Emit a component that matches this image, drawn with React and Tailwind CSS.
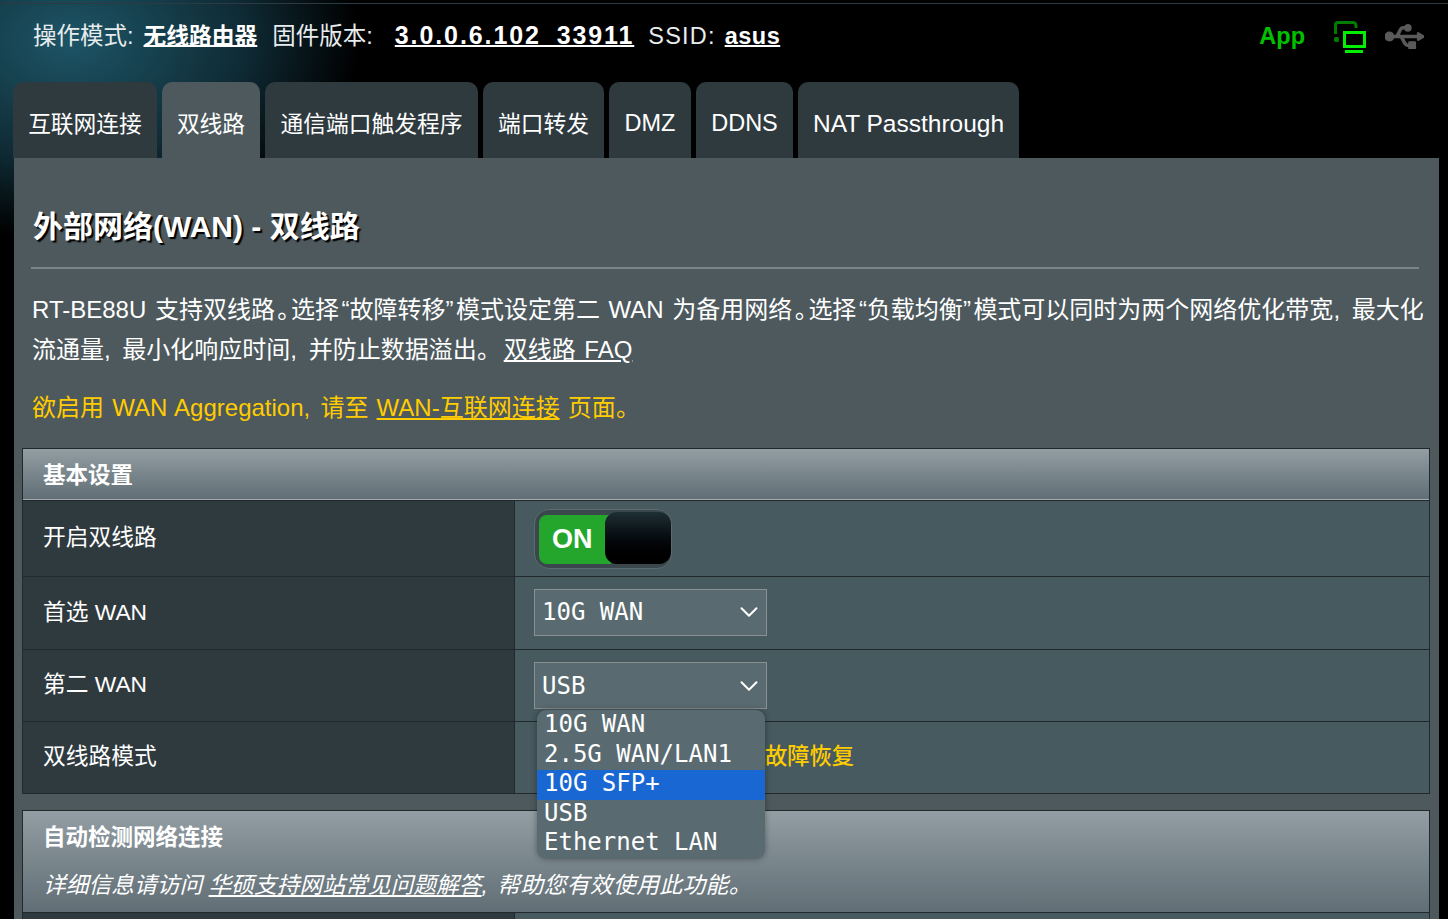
import React from 'react';
import { ChevronDown } from 'lucide-react';
import { FaUsb } from 'react-icons/fa';

const font = 'font-["Liberation_Sans","Noto_Sans_CJK_SC",sans-serif]';

const tabs = [
  { label: '互联网连接', width: 'w-[144px]', size: 'text-[22.75px]' },
  { label: '双线路', width: 'w-[98px]', size: 'text-[22.75px]', active: true },
  { label: '通信端口触发程序', width: 'w-[213px]', size: 'text-[22.75px]' },
  { label: '端口转发', width: 'w-[121px]', size: 'text-[22.75px]' },
  { label: 'DMZ', width: 'w-[82px]', size: 'text-[23.5px]' },
  { label: 'DDNS', width: 'w-[97px]', size: 'text-[23.5px]' },
  { label: 'NAT Passthrough', width: 'w-[221px]', size: 'text-[24.5px]' },
];

const options = ['10G WAN', '2.5G WAN/LAN1', '10G SFP+', 'USB', 'Ethernet LAN'];

const MonitorIcon = () => (
  <svg width="36" height="36" viewBox="0 0 36 36" fill="none">
    <path d="M3.5 14 V5 a2.5 2.5 0 0 1 2.5 -2.5 H21 a3 3 0 0 1 3 3 V8" stroke="#007c00" strokeWidth="3" />
    <rect x="2" y="17" width="5" height="5" rx="1.5" fill="#007c00" />
    <rect x="12.5" y="12.5" width="20" height="14" stroke="#00f000" strokeWidth="3" />
    <rect x="13" y="30" width="18" height="3" fill="#00f000" />
  </svg>
);

// spacing around the punctuation in the help text
const Comma = () => <span className="mr-[3px]">,</span>;
const Stop = () => <span className="mx-[2px]">。</span>;
const Open = () => <span className="ml-[2.5px]">“</span>;
const Close = () => <span className="mr-[2.5px]">”</span>;

const Select = ({ value, className = '' }) => (
  <div className={`flex h-[47px] w-[233px] items-center justify-between border border-[#8a8f91] bg-[#596b71] pl-[7px] pr-[2px] font-['DejaVu_Sans_Mono',monospace] text-[24px] text-white ${className}`}>
    <span>{value}</span>
    <ChevronDown size={30} strokeWidth={1.6} />
  </div>
);

const Row = ({ label, height, children }) => (
  <div className={`flex ${height} border-t border-[#22292c]`}>
    <div className="flex w-[492px] shrink-0 items-center border-r border-[#22292c] bg-[#2f3a3f] pb-[2px] pl-[20px] text-[22.75px] text-white">
      {label}
    </div>
    <div className="relative flex flex-1 items-center bg-[#475a5f] pl-[19px]">{children}</div>
  </div>
);

const App = () => {
  return (
    <div className={`${font} relative h-[919px] w-[1448px] overflow-hidden bg-black text-white`}>
      {/* glow behind the header */}
      <div className="absolute left-[-220px] top-[-160px] h-[400px] w-[580px] rounded-full bg-[radial-gradient(closest-side,#1d5566,#0f2b35_60%,transparent)]" />
      <div className="relative mt-[3px] h-[1px] bg-[#2c3a41]" />

      <div className="relative flex h-[78px] items-start pl-[33px] pr-[24px] pt-[13px]">
        <div className="flex items-baseline whitespace-nowrap text-[23.5px]">
          <span className="text-[#e8ecee]">操作模式:</span>
          <span className="ml-[10px] text-[22.75px] font-bold underline decoration-2">无线路由器</span>
          <span className="ml-[15px] text-[#e8ecee]">固件版本:</span>
          <span className="ml-[22px] text-[25px] font-bold tracking-[1.9px] underline decoration-2">3.0.0.6.102_33911</span>
          <span className="ml-[14px] tracking-[1.2px] text-[#e8ecee]">SSID:</span>
          <span className="ml-[9px] font-bold tracking-[0.5px] underline decoration-2">asus</span>
        </div>
        <div className="ml-auto flex items-center">
          <span className="text-[23.5px] font-bold text-[#00c000]">App</span>
          <span className="ml-[27px] mt-[2px]"><MonitorIcon /></span>
          <FaUsb className="ml-[17px] text-[#5a5a5a]" size={39} stroke="#5a5a5a" strokeWidth={22} />
        </div>
      </div>

      <div className="relative flex h-[76px] gap-[5px] pl-[13px]">
        {tabs.map((t) => (
          <div
            key={t.label}
            className={`${t.width} ${t.size} flex items-center justify-center whitespace-nowrap rounded-t-[10px] pt-[8px] ${t.active ? 'bg-[#4d595d]' : 'bg-[#2f3a3f]'}`}
          >
            {t.label}
          </div>
        ))}
      </div>

      <div className="relative ml-[14px] w-[1425px] bg-[#4d595d] pt-[47px]">
        <h1 className="pl-[19px] text-[30px] font-bold leading-[44px] [text-shadow:2px_2px_1px_#000]">
          外部网络(WAN) - 双线路
        </h1>
        <div className="ml-[17px] mr-[20px] mt-[18px] h-[2px] bg-[#7b8588]" />

        <p className="mt-[21px] whitespace-nowrap pl-[18px] text-[24px] leading-[40px] text-white [font-feature-settings:'palt'] [word-spacing:2px]">
          RT-BE88U 支持双线路<Stop />选择<Open />故障转移<Close />模式设定第二 WAN 为备用网络<Stop />选择<Open />负载均衡<Close />模式可以同时为两个网络优化带宽<Comma /> 最大化
          <br />
          流通量<Comma /> 最小化响应时间<Comma /> 并防止数据溢出<span className="mr-[15px]">。</span><span className="underline">双线路 FAQ</span>
        </p>
        <p className="mt-[18px] pl-[18px] text-[24px] leading-[40px] text-[#ffcc00] [font-feature-settings:'palt'] [word-spacing:1.5px]">
          欲启用 WAN Aggregation<span className="mr-[2px]">,</span> 请至 <span className="underline">WAN-互联网连接</span> 页面。
        </p>

        <div className="ml-[8px] mr-[9px] mt-[20px] border border-[#22292c]">
          <div className="flex h-[51px] items-center border-b border-[#a3abae] bg-gradient-to-b from-[#929ea3] to-[#616e75] pl-[20px] pt-[4px] text-[22.5px] font-bold">
            基本设置
          </div>
          <Row label="开启双线路" height="h-[76px]">
            <div className="relative h-[60px] w-[138px] rounded-[15px] border border-[#5c6b70] bg-[#3a474c] pl-[4px] pt-[5px]">
              <div className="flex h-[49px] w-[72px] items-center rounded-l-[8px] bg-[#24a62d] pl-[13px] text-[27px] font-bold">
                ON
              </div>
              <div className="absolute right-[0px] top-[2px] h-[52px] w-[66px] rounded-[12px] bg-gradient-to-b from-[#1f2f36] to-black" />
            </div>
          </Row>
          <Row label="首选 WAN" height="h-[73px]"><Select value="10G WAN" className="mb-[2px]" /></Row>
          <Row label="第二 WAN" height="h-[72px]"><Select value="USB" /></Row>
          <Row label="双线路模式" height="h-[72px]">
            <span className="ml-[231px] pb-[2px] text-[22.25px] font-medium text-[#ffcc00]">故障恢复</span>
          </Row>
        </div>

        <div className="ml-[8px] mr-[9px] mt-[16px] border border-[#22292c]">
          <div className="h-[101px] bg-gradient-to-b from-[#929ea3] to-[#616e75] pl-[20px] pt-[10px]">
            <div className="text-[22.5px] font-bold leading-[34px]">自动检测网络连接</div>
            <div className="mt-[15px] text-[22.75px] italic leading-[30px]">
              详细信息请访问 <span className="underline">华硕支持网站常见问题解答</span><span className="mr-[3px]">,</span> <span className="tracking-[0.4px]">帮助您有效使用此功能。</span>
            </div>
          </div>
          <Row label="" height="h-[40px]" />
        </div>

        {/* open select list */}
        <div className="absolute left-[523px] top-[552px] w-[228px] overflow-hidden rounded-[9px] bg-[#596b71] pt-[1px] font-['DejaVu_Sans_Mono',monospace] text-[24px] leading-[26.5px] shadow-[0_0_6px_rgba(0,0,0,0.35)]">
          {options.map((o) => (
            <div key={o} className={`pb-[3px] pl-[7px] ${o === '10G SFP+' ? 'bg-[#1967d2]' : ''}`}>{o}</div>
          ))}
        </div>
      </div>
    </div>
  );
};

export default App;
